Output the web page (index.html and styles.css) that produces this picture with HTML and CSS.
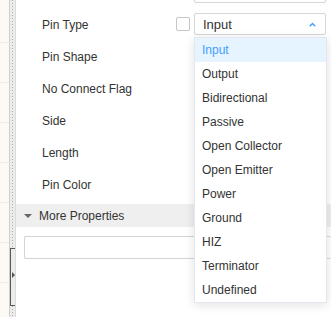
FILE: index.html
```html
<!DOCTYPE html>
<html>
<head>
<meta charset="utf-8">
<link rel="stylesheet" href="styles.css">
</head>
<body>
<div class="app">
  <div class="canvas"></div>
  <div class="divider">
    <div class="dots"></div>
    <div class="handle"><span class="handle-arrow"></span></div>
  </div>
  <div class="panel">
    <div class="form">
      <div class="row">
        <div class="label"></div>
        <div class="check hidden"></div>
        <div class="select"></div>
      </div>
      <div class="row">
        <div class="label">Pin Type</div>
        <div class="check"></div>
        <div class="select open">
          <span class="select-text">Input</span>
          <svg class="chev" width="7" height="5" viewBox="0 0 7 5"><path d="M0.8 4.2 L3.5 1.4 L6.2 4.2" fill="none" stroke="#409eff" stroke-width="1.4"/></svg>
        </div>
      </div>
      <div class="row"><div class="label">Pin Shape</div></div>
      <div class="row"><div class="label">No Connect Flag</div></div>
      <div class="row"><div class="label">Side</div></div>
      <div class="row"><div class="label">Length</div></div>
      <div class="row"><div class="label">Pin Color</div></div>
      <div class="band"><span class="tri"></span><span>More Properties</span></div>
      <div class="textbox"></div>
    </div>
    <ul class="dropdown">
      <li class="item selected">Input</li>
      <li class="item">Output</li>
      <li class="item">Bidirectional</li>
      <li class="item">Passive</li>
      <li class="item">Open Collector</li>
      <li class="item">Open Emitter</li>
      <li class="item">Power</li>
      <li class="item">Ground</li>
      <li class="item">HIZ</li>
      <li class="item">Terminator</li>
      <li class="item">Undefined</li>
    </ul>
  </div>
</div>
</body>
</html>
```

FILE: styles.css
```css
html, body {
  margin: 0;
  padding: 0;
  background: #fff;
}
body {
  font-family: "Liberation Sans", Arial, sans-serif;
  font-size: 12px;
  color: #333;
}
.app {
  display: flex;
  width: 331px;
  height: 317px;
  overflow: hidden;
}
.canvas {
  width: 9px;
  flex: none;
  background-color: #fdf9f4;
  background-image: repeating-linear-gradient(to bottom, transparent 0, transparent 39px, #f1ece6 39px, #f1ece6 40px);
  background-position: 0 3px;
}
.divider {
  position: relative;
  width: 5px;
  flex: none;
  background: #ececec;
  border-left: 1px solid #cfcfcf;
  border-right: 1px solid #dadada;
}
.dots {
  position: absolute;
  left: 2px;
  top: 0;
  bottom: 0;
  width: 1px;
  background-image: repeating-linear-gradient(to bottom, #a9a9a9 0, #a9a9a9 1px, transparent 1px, transparent 3px);
}
.handle {
  position: absolute;
  left: 0;
  top: 248px;
  width: 5px;
  height: 58px;
  border: 1px solid #5a5a5a;
  border-right: none;
  box-sizing: border-box;
  background: #ececec;
}
.handle-arrow {
  position: absolute;
  left: 1px;
  top: 23px;
  width: 0;
  height: 0;
  border-top: 3px solid transparent;
  border-bottom: 3px solid transparent;
  border-left: 3px solid #555;
}
.panel {
  position: relative;
  flex: 1;
  background: #fff;
}
.form {
  margin-top: -24px;
}
.row {
  display: flex;
  align-items: center;
  height: 32px;
}
.label {
  width: 160px;
  padding-left: 26px;
  box-sizing: border-box;
  flex: none;
  line-height: 14px;
  padding-top: 1px;
}
.check {
  width: 14px;
  height: 14px;
  box-sizing: border-box;
  border: 1px solid #c6c6c6;
  border-radius: 2px;
  background: #fff;
  margin-right: 4px;
  flex: none;
}
.check.hidden {
  visibility: hidden;
}
.select {
  position: relative;
  width: 132px;
  height: 22px;
  box-sizing: border-box;
  border: 1px solid #d6d6d6;
  border-radius: 2px;
  background: #fff;
  display: flex;
  align-items: center;
  padding-left: 8px;
  font-size: 13px;
  color: #333;
}
.select-text {
  flex: 1;
}
.chev {
  margin-right: 9px;
  margin-top: 1px;
}
.band {
  margin-top: 4px;
  height: 23px;
  background: #efefef;
  display: flex;
  align-items: center;
  padding-left: 8px;
  color: #333;
}
.tri {
  width: 0;
  height: 0;
  border-left: 4px solid transparent;
  border-right: 4px solid transparent;
  border-top: 4px solid #666;
  margin-right: 7px;
  margin-top: 1px;
}
.textbox {
  margin: 9px 0 0 8px;
  height: 23px;
  box-sizing: border-box;
  border: 1px solid #d4d4d4;
  border-radius: 2px;
  border-right: none;
}
.dropdown {
  position: absolute;
  left: 178px;
  top: 37px;
  width: 133px;
  margin: 0;
  padding: 0;
  list-style: none;
  background: #fff;
  border: 1px solid #e4e7ed;
  box-sizing: border-box;
  box-shadow: 0 2px 10px rgba(0, 0, 0, 0.12);
}
.item {
  height: 24px;
  line-height: 24px;
  padding-left: 7px;
  color: #333;
  white-space: nowrap;
}
.item.selected {
  background: #e6f4ff;
  color: #409eff;
}
```
